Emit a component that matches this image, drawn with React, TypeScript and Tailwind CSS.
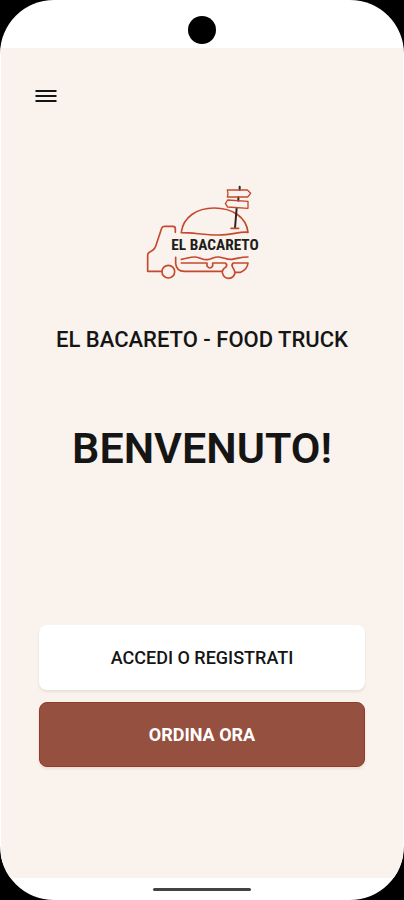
const Logo = () => (
  <svg
    viewBox="42 45 351 285"
    className="w-[117px] h-[95px]"
    fill="none"
    stroke="#c5492f"
    strokeWidth="5"
    strokeLinecap="round"
    strokeLinejoin="round"
    role="img"
    aria-label="El Bacareto"
  >
    {/* Cab */}
    <path d="M136 187V176Q136 169 129 169H103Q97 169 95 175L77 229Q75 236 69 240L58 247Q53 250 53 256V304H94" />
    <circle cx="115" cy="305" r="19" />
    {/* Bun */}
    <path d="M154 186C160 142 200 114 252 114C308 114 349 142 354 187C330 184 304 195 266 195C222 195 190 188 154 188Z" />
    {/* Filling and truck bed */}
    <path d="M154 268C172 266 180 260 196 261C212 262 216 270 232 269C246 267 252 260 266 261C282 262 290 270 306 268C324 265 334 261 354 261" />
    <path d="M137 262V280Q139 304 163 304H276" />
    <path d="M154 279H231V288Q240 300 248 288V279H286Q293 284 288 291Q276 298 277 308Q281 325 296 325Q313 324 315 307H332Q352 298 354 279H310Q304 283 307 290Q312 298 315 307" />
    {/* Signpost */}
    <path d="M329 50V60M325 82V92M320 114L315 174" stroke="#292625" strokeWidth="6" />
    <path d="M303 175H326" />
    <path d="M292 60H352L362 70L353 81H292L294 71Z" strokeWidth="4" />
    <path d="M293 90L354 94V115L293 111L286 101Z" strokeWidth="4" />
    <text
      x="255"
      y="241"
      textAnchor="middle"
      fill="#201d1b"
      stroke="none"
      className="font-['Liberation_Sans_Narrow','Roboto_Condensed',Roboto,sans-serif] text-[46px] font-bold"
    >
      EL BACARETO
    </text>
  </svg>
);

const App = () => {
  return (
    <div className="min-h-screen bg-black flex flex-col font-[Roboto,sans-serif] text-[#151515]">
      <div className="flex-1 flex flex-col bg-white rounded-[54px] overflow-hidden">
        {/* Status bar */}
        <header className="h-12 flex justify-center items-end pb-1">
          <span className="size-7 rounded-full bg-black" />
        </header>

        <main className="flex-1 flex flex-col mx-px px-[38px] bg-[#faf2ec]">
          <nav className="pt-9 -ml-2">
            <button type="button" aria-label="Menu" className="block p-1">
              <svg viewBox="0 0 22 16" className="w-[22px] h-4" stroke="#151515" strokeWidth="2">
                <path d="M0.5 3H21.5M0.5 8H21.5M0.5 13H21.5" />
              </svg>
            </button>
          </nav>

          <div className="flex flex-col items-center pt-[77px] text-center">
            <Logo />
            <h2 className="mt-11 text-[22px] leading-8 font-medium whitespace-nowrap">
              EL BACARETO - FOOD TRUCK
            </h2>
            <h1 className="mt-16 text-[43px] leading-[56px] font-semibold">BENVENUTO!</h1>
          </div>

          <div className="mt-auto mb-[111px] flex flex-col gap-3">
            <button
              type="button"
              className="h-[65px] rounded-lg bg-white text-[18px] font-medium shadow-[0_2px_3px_rgba(0,0,0,0.08)]"
            >
              ACCEDI O REGISTRATI
            </button>
            <button
              type="button"
              className="h-[65px] rounded-lg bg-[#965040] border border-[#923a25] text-white text-[18px] font-bold shadow-[0_2px_3px_rgba(0,0,0,0.08)]"
            >
              ORDINA ORA
            </button>
          </div>
        </main>

        {/* Gesture bar */}
        <footer className="h-[22px] flex justify-center items-center">
          <span className="w-[98px] h-[3px] rounded-full bg-[#454244]" />
        </footer>
      </div>
    </div>
  );
};

export default App;
